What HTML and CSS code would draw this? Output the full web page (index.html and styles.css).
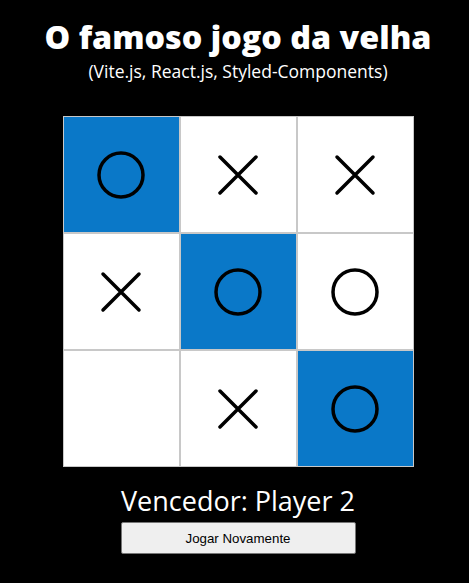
FILE: index.html
```html
<!DOCTYPE html>
<html lang="pt-BR">
<head>
<meta charset="utf-8">
<title>Jogo da velha</title>
<link rel="stylesheet" href="styles.css">
</head>
<body>
<main class="app">
  <h1 class="title">O famoso jogo da velha</h1>
  <p class="subtitle">(Vite.js, React.js, Styled-Components)</p>
  <div class="board">
    <div class="cell win"><svg class="mark" viewBox="0 0 60 60"><circle cx="30" cy="30" r="22" /></svg></div>
    <div class="cell"><svg class="mark" viewBox="0 0 60 60"><path d="M12 12 L48 48 M48 12 L12 48" /></svg></div>
    <div class="cell"><svg class="mark" viewBox="0 0 60 60"><path d="M12 12 L48 48 M48 12 L12 48" /></svg></div>
    <div class="cell"><svg class="mark" viewBox="0 0 60 60"><path d="M12 12 L48 48 M48 12 L12 48" /></svg></div>
    <div class="cell win"><svg class="mark" viewBox="0 0 60 60"><circle cx="30" cy="30" r="22" /></svg></div>
    <div class="cell"><svg class="mark" viewBox="0 0 60 60"><circle cx="30" cy="30" r="22" /></svg></div>
    <div class="cell"></div>
    <div class="cell"><svg class="mark" viewBox="0 0 60 60"><path d="M12 12 L48 48 M48 12 L12 48" /></svg></div>
    <div class="cell win"><svg class="mark" viewBox="0 0 60 60"><circle cx="30" cy="30" r="22" /></svg></div>
  </div>
  <p class="winner">Vencedor: Player 2</p>
  <button class="reset" type="button">Jogar Novamente</button>
</main>
</body>
</html>
```

FILE: styles.css
```css
html, body {
  margin: 0;
  padding: 0;
  background: #000;
}
.app {
  display: flex;
  flex-direction: column;
  align-items: center;
  padding-left: 7px;
  padding-top: 16px;
  color: #fff;
  font-family: "Open Sans", "DejaVu Sans", sans-serif;
}
.title {
  margin: 0;
  font-size: 32.3px;
  font-weight: 800;
  line-height: 40px;
  letter-spacing: 0;
}
.subtitle {
  margin: 3px 0 0;
  font-size: 17.5px;
  line-height: 24px;
}
.board {
  margin-top: 33px;
  display: grid;
  grid-template-columns: repeat(3, 117px);
  grid-template-rows: repeat(3, 117px);
  width: 351px;
}
.cell {
  box-sizing: border-box;
  background: #fff;
  border: 1px solid #c8c8c8;
  display: flex;
  align-items: center;
  justify-content: center;
}
.cell.win {
  background: #0a78c8;
}
.mark {
  width: 60px;
  height: 60px;
  fill: none;
  stroke: #000;
  stroke-width: 3.5;
  stroke-linecap: round;
}
.winner {
  margin: 17px 0 0;
  font-size: 27px;
  line-height: 34px;
}
.reset {
  box-sizing: border-box;
  margin-top: 4px;
  width: 235px;
  height: 32px;
  font-family: "Liberation Sans", Arial, sans-serif;
  font-size: 13.3px;
  color: #000;
  background: #efefef;
  border: 1px solid #767676;
  border-radius: 2px;
  padding: 0;
}
```
